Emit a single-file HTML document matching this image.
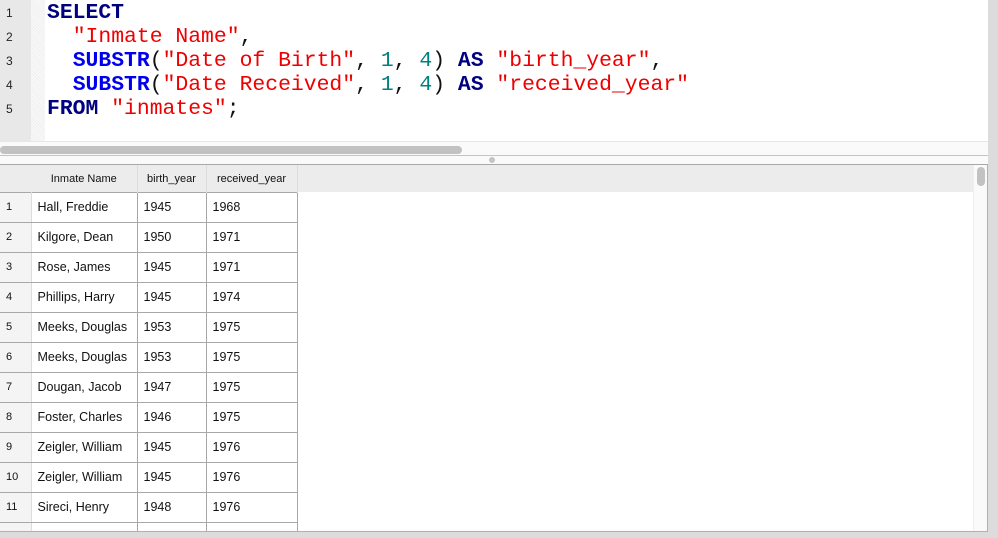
<!DOCTYPE html>
<html><head><style>
body{margin:0;width:998px;height:538px;background:#dcdcdc;position:relative;overflow:hidden;font-family:"Liberation Sans",sans-serif}
.ed{position:absolute;left:0;top:0;width:988px;height:141px;background:#fff}
.gut{position:absolute;left:0;top:0;width:31px;height:141px;background:#e8e8e8}
.dots{position:absolute;left:31px;top:0;width:14px;height:141px;background:repeating-linear-gradient(45deg,#f0f0f0 0 1px,#fafafa 1px 2px)}
.ln{position:absolute;left:6px;font-size:12px;color:#222}
.code{position:absolute;left:47px;font-family:"Liberation Mono",monospace;font-size:21.4px;line-height:24px;white-space:pre;font-weight:bold;color:#111}
.k{color:#000080}.f{color:#0000ee}.s{color:#ee0000;font-weight:normal}.n{color:#008080;font-weight:normal}.p{font-weight:normal}
.hs{position:absolute;left:0;top:141px;width:988px;height:15px;background:#fafafa;border-top:1px solid #e6e6e6;border-bottom:1px solid #c4c4c4;box-sizing:border-box}
.th{position:absolute;left:0;top:4px;width:462px;height:8px;border-radius:4px;background:#c2c2c2}
.sp{position:absolute;left:0;top:156px;width:988px;height:8px;background:#fafafa;border-bottom:1px solid #a8a8a8}
.dot{position:absolute;left:489px;top:1px;width:6px;height:6px;border-radius:3px;background:#c4c4c4}
.res{position:absolute;left:0;top:165px;width:988px;height:367px;background:#fff;border-right:1px solid #b0b0b0;border-bottom:1px solid #b0b0b0;box-sizing:border-box;overflow:hidden}
.hdr{position:absolute;left:0;top:0;width:973px;height:27px;background:#ececec}
.vs{position:absolute;left:973px;top:0;width:14px;height:367px;background:#fafafa;border-left:1px solid #eee}
.vt{position:absolute;left:3px;top:2px;width:8px;height:19px;border-radius:4px;background:#c2c2c2}
table{position:absolute;left:0;top:0;border-collapse:collapse;font-size:12.5px;color:#111}
td{height:30px;border:1px solid #a8a8a8;padding:0 0 1px 6px;box-sizing:border-box}
td.r{background:#f4f4f4;font-size:11px;border-left:none;padding-left:6px;border-right:1px solid #ddd}
tr.h td{height:27px;border:none;border-right:1px solid #dcdcdc;font-size:11px;text-align:center;padding:2px 0 0;background:#ececec}
</style></head><body>
<div class="ed"><div class="gut"></div><div class="dots"></div>
<div class="ln" style="top:6px">1</div><div class="ln" style="top:30px">2</div><div class="ln" style="top:54px">3</div><div class="ln" style="top:78px">4</div><div class="ln" style="top:102px">5</div>
<div class="code" style="top:1px"><span class="k">SELECT</span>
  <span class="s">"Inmate Name"</span><span class="p">,</span>
  <span class="f">SUBSTR</span><span class="p">(</span><span class="s">"Date of Birth"</span><span class="p">, </span><span class="n">1</span><span class="p">, </span><span class="n">4</span><span class="p">) </span><span class="k">AS</span> <span class="s">"birth_year"</span><span class="p">,</span>
  <span class="f">SUBSTR</span><span class="p">(</span><span class="s">"Date Received"</span><span class="p">, </span><span class="n">1</span><span class="p">, </span><span class="n">4</span><span class="p">) </span><span class="k">AS</span> <span class="s">"received_year"</span>
<span class="k">FROM</span> <span class="s">"inmates"</span><span class="p">;</span></div></div>
<div class="hs"><div class="th"></div></div>
<div class="sp"><div class="dot"></div></div>
<div class="res"><div class="hdr"></div>
<table>
<tr class="h"><td style="width:31px;border-right:none"></td><td style="width:106px">Inmate Name</td><td style="width:69px">birth_year</td><td style="width:91px">received_year</td></tr>
<tr><td class="r">1</td><td>Hall, Freddie</td><td>1945</td><td>1968</td></tr>
<tr><td class="r">2</td><td>Kilgore, Dean</td><td>1950</td><td>1971</td></tr>
<tr><td class="r">3</td><td>Rose, James</td><td>1945</td><td>1971</td></tr>
<tr><td class="r">4</td><td>Phillips, Harry</td><td>1945</td><td>1974</td></tr>
<tr><td class="r">5</td><td>Meeks, Douglas</td><td>1953</td><td>1975</td></tr>
<tr><td class="r">6</td><td>Meeks, Douglas</td><td>1953</td><td>1975</td></tr>
<tr><td class="r">7</td><td>Dougan, Jacob</td><td>1947</td><td>1975</td></tr>
<tr><td class="r">8</td><td>Foster, Charles</td><td>1946</td><td>1975</td></tr>
<tr><td class="r">9</td><td>Zeigler, William</td><td>1945</td><td>1976</td></tr>
<tr><td class="r">10</td><td>Zeigler, William</td><td>1945</td><td>1976</td></tr>
<tr><td class="r">11</td><td>Sireci, Henry</td><td>1948</td><td>1976</td></tr>
<tr><td class="r">12</td><td>Lucas, Harold</td><td>1951</td><td>1977</td></tr>
</table>
<div class="vs"><div class="vt"></div></div></div>
</body></html>
